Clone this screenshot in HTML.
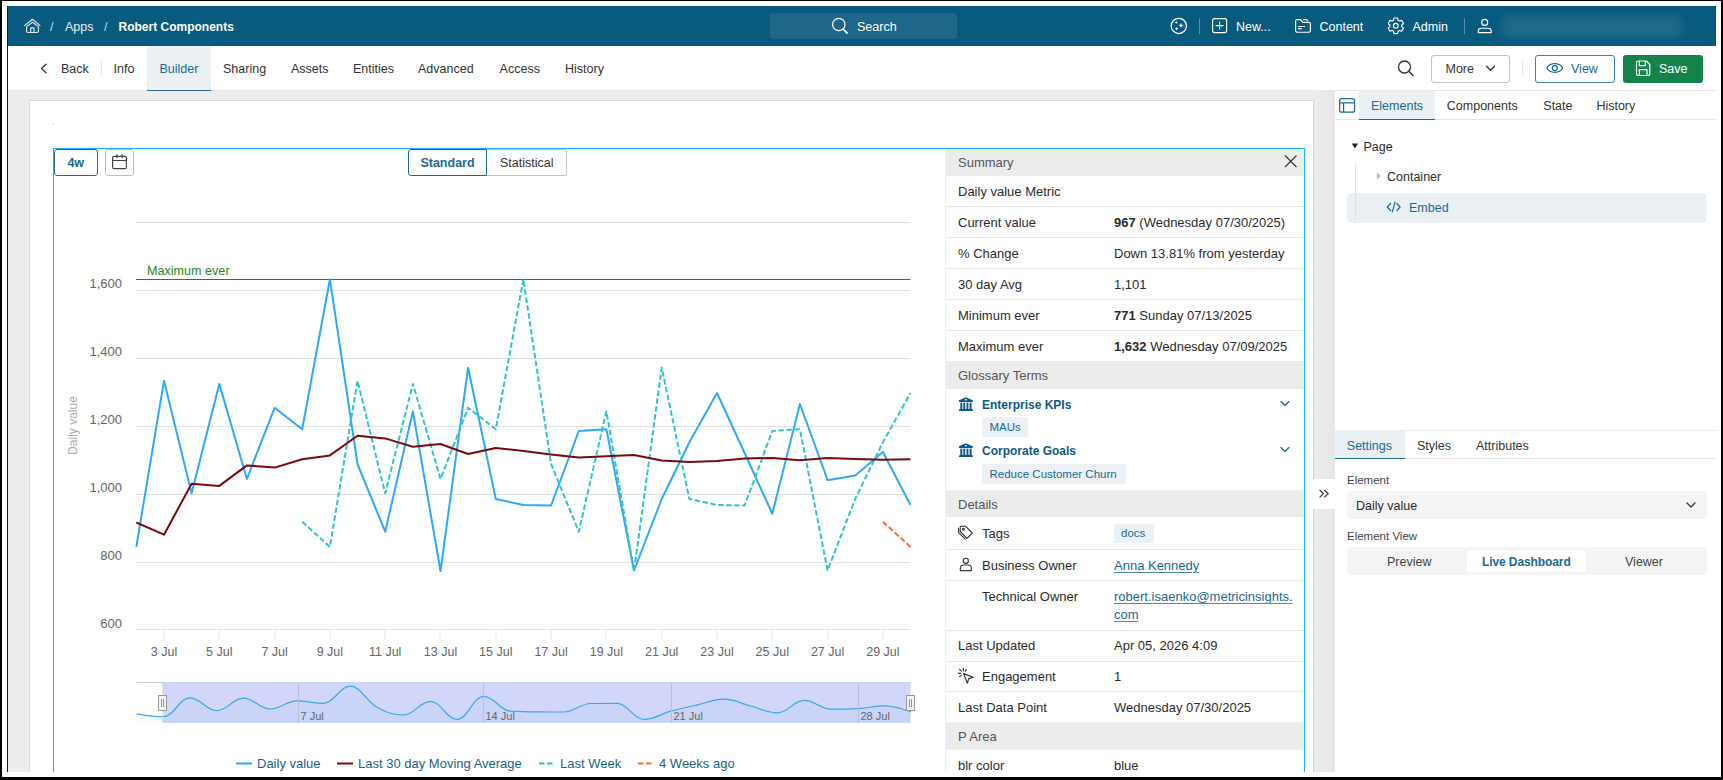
<!DOCTYPE html>
<html><head><meta charset="utf-8">
<style>
*{box-sizing:border-box;margin:0;padding:0}
html,body{width:1723px;height:780px;overflow:hidden;background:#fff;font-family:"Liberation Sans",sans-serif;font-size:13px;color:#2b2b2b}
.a{position:absolute}
.t{position:absolute;white-space:nowrap;line-height:16px}
svg{position:absolute;overflow:visible}
</style></head><body>
<!-- frame -->
<div class="a" style="left:0;top:0;width:1723px;height:1px;background:#000"></div>
<div class="a" style="left:0;top:0;width:2px;height:780px;background:#000"></div>
<div class="a" style="left:1721px;top:0;width:2px;height:780px;background:#000"></div>
<div class="a" style="left:0;top:777px;width:1723px;height:3px;background:#000"></div>
<div class="a" style="left:7px;top:6px;width:1px;height:766px;background:#1a1a1a"></div>

<!-- gray background -->
<div class="a" style="left:8px;top:91px;width:1708px;height:681px;background:#ededed"></div>

<!-- header -->
<div class="a" style="left:8px;top:6px;width:1708px;height:40px;background:#085a7e"></div>

<svg style="left:0;top:0" width="1723" height="50" viewBox="0 0 1723 50" fill="none" stroke="#e3ecf1" stroke-width="1.15" stroke-linecap="round" stroke-linejoin="round">
 <path d="M24.5 25.6 L32.5 19.3 L40 25.6"/>
 <path d="M26.6 26.6 L32.5 22.2 L38.4 26.6 V31 Q38.4 32.5 36.9 32.5 H28.1 Q26.6 32.5 26.6 31 Z"/>
 <path d="M30.7 32.5 V27.8 H34 V32.5"/>
 <circle cx="1178.8" cy="25.9" r="7.6" stroke="#fff" stroke-width="1.25"/>
 <path d="M1181 22.9 Q1181.4 25.1 1183.6 25.5 Q1181.4 25.9 1181 28.1 Q1180.6 25.9 1178.4 25.5 Q1180.6 25.1 1181 22.9Z" fill="#fff" stroke="none"/>
 <path d="M1176.3 21 Q1176.5 22.3 1177.8 22.5 Q1176.5 22.7 1176.3 24 Q1176.1 22.7 1174.8 22.5 Q1176.1 22.3 1176.3 21Z" fill="#fff" stroke="none"/>
 <path d="M1176.6 26.9 Q1176.9 28.4 1178.4 28.7 Q1176.9 29 1176.6 30.5 Q1176.3 29 1174.8 28.7 Q1176.3 28.4 1176.6 26.9Z" fill="#fff" stroke="none"/>
 <path d="M1199.5 18.5 V33.5" stroke="#5e8eaa" stroke-width="1"/>
 <rect x="1212.6" y="18.6" width="14" height="14" rx="2" stroke="#fff" stroke-width="1.2"/>
 <path d="M1219.6 22.1 V29.1 M1216.1 25.6 H1223.1" stroke="#fff" stroke-width="1.2"/>
 <path d="M1303.6 19.6 H1306.7 L1307.7 20.6" stroke="#fff" stroke-width="1.15"/>
 <path d="M1295.6 30.8 V21 Q1295.6 19.6 1297 19.6 H1300.6 L1302.8 22.4 H1309 Q1310.4 22.4 1310.4 23.8 V30.8 Q1310.4 32.2 1309 32.2 H1297 Q1295.6 32.2 1295.6 30.8Z" stroke="#fff" stroke-width="1.15"/>
 <path d="M1298.4 26.5 H1304.6 M1298.4 28.6 H1301.4" stroke="#fff" stroke-width="1.1"/>
 <path d="M1464.5 18.5 V33.5" stroke="#5e8eaa" stroke-width="1"/>
 <circle cx="1484.7" cy="22.4" r="3" stroke="#fff" stroke-width="1.15"/>
 <path d="M1478.3 32.6 V31 Q1478.3 28.2 1481.5 28.2 H1488 Q1491.2 28.2 1491.2 31 V32.6 Z" stroke="#fff" stroke-width="1.15"/>
<path d="M1394.00 18.01 L1397.60 18.01 L1398.05 20.24 L1399.49 21.07 L1401.65 20.34 L1403.45 23.46 L1401.74 24.96 L1401.74 26.64 L1403.45 28.14 L1401.65 31.26 L1399.49 30.53 L1398.05 31.36 L1397.60 33.59 L1394.00 33.59 L1393.55 31.36 L1392.11 30.53 L1389.95 31.26 L1388.15 28.14 L1389.86 26.64 L1389.86 24.96 L1388.15 23.46 L1389.95 20.34 L1392.11 21.07 L1393.55 20.24Z" stroke="#fff" stroke-width="1.15"/><circle cx="1395.8" cy="25.8" r="2.4" stroke="#fff" stroke-width="1.15"/>
</svg>

<div class="t" style="left:50px;top:18.5px;color:#c9d9e3;font-size:12.5px">/</div>
<div class="t" style="left:65px;top:18.5px;color:#e8eff3;font-size:12.5px">Apps</div>
<div class="t" style="left:104px;top:18.5px;color:#c9d9e3;font-size:12.5px">/</div>
<div class="t" style="left:118.5px;top:18.5px;color:#fff;font-size:12px;font-weight:bold">Robert Components</div>
<div class="a" style="left:770px;top:13px;width:187px;height:26px;border-radius:3px;background:#1f678a"></div>
<svg style="left:0;top:0" width="1000" height="50" fill="none" stroke="#fff" stroke-width="1.2">
 <circle cx="838.8" cy="24.5" r="6.2"/>
 <path d="M843.2 29.2 L847 33" stroke-width="1.8" stroke-linecap="round"/>
</svg>
<div class="t" style="left:857px;top:18.5px;color:#fff;font-size:12.5px">Search</div>
<div class="t" style="left:1236px;top:18.5px;color:#fff;font-size:12.5px">New...</div>
<div class="t" style="left:1319.5px;top:18.5px;color:#fff;font-size:12.5px">Content</div>
<div class="t" style="left:1412.5px;top:18.5px;color:#fff;font-size:12.5px">Admin</div>
<div class="a" style="left:1498px;top:12px;width:188px;height:29px;overflow:hidden"><div style="position:absolute;left:4px;top:3px;width:180px;height:23px;border-radius:6px;background:#1f6a8a;filter:blur(5px)"></div></div>


<!-- toolbar -->
<div class="a" style="left:8px;top:46px;width:1708px;height:45px;background:#fff"></div>

<div class="a" style="left:8px;top:90px;width:1708px;height:1px;background:#e6e6e6"></div>
<div class="a" style="left:147px;top:46px;width:63.6px;height:45px;background:#ebf0f4"></div>
<div class="a" style="left:147px;top:89.5px;width:63.6px;height:1.5px;background:#1f6c96"></div>
<svg style="left:0;top:46px" width="120" height="45" fill="none" stroke="#333" stroke-width="1.3" stroke-linecap="round" stroke-linejoin="round">
 <path d="M46 18.2 L41.5 22.5 L46 26.8"/>
</svg>
<div class="a" style="left:100.5px;top:60px;width:1px;height:16px;background:#e8e8e8"></div>
<div class="t" style="left:61.0px;top:60.5px;color:#333;font-size:12.5px">Back</div>
<div class="t" style="left:113.6px;top:60.5px;color:#333;font-size:12.5px">Info</div>
<div class="t" style="left:159.4px;top:60.5px;color:#1a6a94;font-size:12.5px">Builder</div>
<div class="t" style="left:223.0px;top:60.5px;color:#333;font-size:12.5px">Sharing</div>
<div class="t" style="left:290.9px;top:60.5px;color:#333;font-size:12.5px">Assets</div>
<div class="t" style="left:353.0px;top:60.5px;color:#333;font-size:12.5px">Entities</div>
<div class="t" style="left:418.0px;top:60.5px;color:#333;font-size:12.5px">Advanced</div>
<div class="t" style="left:499.6px;top:60.5px;color:#333;font-size:12.5px">Access</div>
<div class="t" style="left:565.0px;top:60.5px;color:#333;font-size:12.5px">History</div>


<div class="a" style="left:1430.5px;top:54.5px;width:79px;height:28px;border:1px solid #c4c4c4;border-radius:3px"></div>
<div class="t" style="left:1445.5px;top:60.5px;color:#333;font-size:12.5px">More</div>
<div class="a" style="left:1522px;top:61px;width:1px;height:15px;background:#e8e8e8"></div>
<div class="a" style="left:1535px;top:54.5px;width:80px;height:28px;border:1px solid #3f80a6;border-radius:3px"></div>
<div class="t" style="left:1571px;top:60.5px;color:#1a6a94;font-size:12.5px">View</div>
<div class="a" style="left:1623px;top:54.5px;width:80px;height:28px;background:#15824a;border-radius:3px"></div>
<div class="t" style="left:1659px;top:60.5px;color:#fff;font-size:12.5px">Save</div>
<svg style="left:0;top:46px" width="1723" height="45" fill="none" stroke="#333" stroke-width="1.3" stroke-linecap="round" stroke-linejoin="round">
 <circle cx="1404.5" cy="21" r="6"/>
 <path d="M1408.8 25.3 L1413 29.5"/>
 <path d="M1486.5 20.3 L1490.5 24.3 L1494.5 20.3"/>
 <path d="M1546.8 22 C1550 16.3 1559.6 16.3 1562.8 22 C1559.6 27.7 1550 27.7 1546.8 22Z" stroke="#1a6a94" stroke-width="1.25"/>
 <circle cx="1554.8" cy="22" r="2.5" stroke="#1a6a94" stroke-width="1.25"/>
 <path d="M1636.5 16.5 Q1636.5 15 1638 15 H1646.3 L1649.8 18.5 V28 Q1649.8 29.5 1648.3 29.5 H1638 Q1636.5 29.5 1636.5 28Z" stroke="#fff" stroke-width="1.2"/>
 <path d="M1639.3 15.2 V19.6 H1645.3 V15.2 M1639.3 29.3 V23.6 H1647 V29.3" stroke="#fff" stroke-width="1.2"/>
</svg>


<!-- page canvas -->
<div class="a" style="left:29px;top:100px;width:1285px;height:672px;background:#fff;border:1px solid #d9d9d9;border-bottom:none"></div>

<div class="a" style="left:52.5px;top:122.5px;width:1.5px;height:1.5px;background:#c4c4c4"></div>
<div class="a" style="left:53px;top:148px;width:1252px;height:624px;border:1px solid #1cb4fa;border-bottom:none"></div>

<div class="a" style="left:54px;top:148.5px;width:43.5px;height:27.5px;border:1px solid #1a6a94;border-radius:3px;background:#fff"></div>
<div class="t" style="left:54px;width:43.5px;text-align:center;top:155px;color:#1a6a94;font-size:12.5px;font-weight:bold">4w</div>
<div class="a" style="left:105px;top:148.5px;width:28.5px;height:27px;border:1px solid #bdbdbd;border-radius:3px;background:#fff"></div>
<svg style="left:0;top:0" width="200" height="200" fill="none" stroke="#444" stroke-width="1.2">
 <rect x="112.6" y="156.3" width="13.8" height="12.4" rx="1.8"/>
 <path d="M112.6 160.5 H126.4 M116.9 154.2 V158.2 M122.1 154.2 V158.2"/>
</svg>
<div class="a" style="left:487px;top:149px;width:79.5px;height:27px;border:1px solid #c4c4c4;border-left:none;border-radius:0 3px 3px 0;background:#fff"></div>
<div class="a" style="left:408px;top:149px;width:79px;height:27px;border:1px solid #1a6a94;border-radius:3px 0 0 3px;background:#fff"></div>
<div class="t" style="left:408px;width:79px;text-align:center;top:155px;color:#1a6a94;font-size:12.5px;font-weight:bold">Standard</div>
<div class="t" style="left:487px;width:79.5px;text-align:center;top:155px;color:#333;font-size:12.5px">Statistical</div>
<svg style="left:0;top:0" width="1723" height="780" font-family="Liberation Sans, sans-serif">
<path d="M136 222.5 H910.5" stroke="#e0e0e0" stroke-width="1"/>
<path d="M136 290.5 H910.5" stroke="#e0e0e0" stroke-width="1"/>
<path d="M136 358.5 H910.5" stroke="#e0e0e0" stroke-width="1"/>
<path d="M136 426.5 H910.5" stroke="#e0e0e0" stroke-width="1"/>
<path d="M136 494.5 H910.5" stroke="#e0e0e0" stroke-width="1"/>
<path d="M136 562.5 H910.5" stroke="#e0e0e0" stroke-width="1"/>
<path d="M136 629.5 H910.5" stroke="#e3e3e3" stroke-width="1"/>
<path d="M164.0 629.5 V639" stroke="#e3e3e3" stroke-width="1"/>
<path d="M219.0 629.5 V639" stroke="#e3e3e3" stroke-width="1"/>
<path d="M275.0 629.5 V639" stroke="#e3e3e3" stroke-width="1"/>
<path d="M330.0 629.5 V639" stroke="#e3e3e3" stroke-width="1"/>
<path d="M385.0 629.5 V639" stroke="#e3e3e3" stroke-width="1"/>
<path d="M440.0 629.5 V639" stroke="#e3e3e3" stroke-width="1"/>
<path d="M496.0 629.5 V639" stroke="#e3e3e3" stroke-width="1"/>
<path d="M551.0 629.5 V639" stroke="#e3e3e3" stroke-width="1"/>
<path d="M606.0 629.5 V639" stroke="#e3e3e3" stroke-width="1"/>
<path d="M662.0 629.5 V639" stroke="#e3e3e3" stroke-width="1"/>
<path d="M717.0 629.5 V639" stroke="#e3e3e3" stroke-width="1"/>
<path d="M772.0 629.5 V639" stroke="#e3e3e3" stroke-width="1"/>
<path d="M828.0 629.5 V639" stroke="#e3e3e3" stroke-width="1"/>
<path d="M883.0 629.5 V639" stroke="#e3e3e3" stroke-width="1"/>
<text x="122" y="287.5" text-anchor="end" font-size="13" fill="#666">1,600</text>
<text x="122" y="355.5" text-anchor="end" font-size="13" fill="#666">1,400</text>
<text x="122" y="423.5" text-anchor="end" font-size="13" fill="#666">1,200</text>
<text x="122" y="491.5" text-anchor="end" font-size="13" fill="#666">1,000</text>
<text x="122" y="559.5" text-anchor="end" font-size="13" fill="#666">800</text>
<text x="122" y="627.5" text-anchor="end" font-size="13" fill="#666">600</text>
<text x="164.0" y="656" text-anchor="middle" font-size="12.5" fill="#666">3 Jul</text>
<text x="219.3" y="656" text-anchor="middle" font-size="12.5" fill="#666">5 Jul</text>
<text x="274.6" y="656" text-anchor="middle" font-size="12.5" fill="#666">7 Jul</text>
<text x="329.9" y="656" text-anchor="middle" font-size="12.5" fill="#666">9 Jul</text>
<text x="385.2" y="656" text-anchor="middle" font-size="12.5" fill="#666">11 Jul</text>
<text x="440.5" y="656" text-anchor="middle" font-size="12.5" fill="#666">13 Jul</text>
<text x="495.8" y="656" text-anchor="middle" font-size="12.5" fill="#666">15 Jul</text>
<text x="551.1" y="656" text-anchor="middle" font-size="12.5" fill="#666">17 Jul</text>
<text x="606.4" y="656" text-anchor="middle" font-size="12.5" fill="#666">19 Jul</text>
<text x="661.7" y="656" text-anchor="middle" font-size="12.5" fill="#666">21 Jul</text>
<text x="717.0" y="656" text-anchor="middle" font-size="12.5" fill="#666">23 Jul</text>
<text x="772.3" y="656" text-anchor="middle" font-size="12.5" fill="#666">25 Jul</text>
<text x="827.6" y="656" text-anchor="middle" font-size="12.5" fill="#666">27 Jul</text>
<text x="882.9" y="656" text-anchor="middle" font-size="12.5" fill="#666">29 Jul</text>
<text transform="translate(76.5 425.5) rotate(-90)" text-anchor="middle" font-size="12" fill="#aaa">Daily value</text>
<path d="M136 279.5 H910.5" stroke="#138a13" stroke-width="1.2"/>
<text x="147" y="275" font-size="12.6" fill="#1d8c1d">Maximum ever</text>
<path d="M136.3 547.0 L164.0 380.8 L191.6 493.3 L219.3 383.9 L246.9 479.0 L274.6 407.8 L302.2 429.2 L329.9 279.2 L357.5 464.0 L385.2 531.7 L412.9 411.3 L440.5 571.0 L468.1 367.7 L495.8 499.0 L523.4 505.0 L551.1 505.5 L578.8 431.0 L606.4 429.2 L634.0 570.5 L661.7 499.0 L689.4 442.3 L717.0 393.0 L744.6 453.0 L772.3 513.8 L799.9 404.0 L827.6 480.2 L855.2 475.4 L882.9 452.0 L910.5 505.0" fill="none" stroke="#2ea8fb" stroke-width="2" stroke-linejoin="round"/>
<path d="M302.2 521.7 L329.9 547.0 L357.5 380.8 L385.2 493.3 L412.9 383.9 L440.5 479.0 L468.1 407.8 L495.8 429.2 L523.4 279.2 L551.1 464.0 L578.8 531.7 L606.4 411.3 L634.0 571.0 L661.7 367.7 L689.4 499.0 L717.0 505.0 L744.6 505.5 L772.3 431.0 L799.9 429.2 L827.6 570.5 L855.2 499.0 L882.9 442.3 L910.5 393.0" fill="none" stroke="#2ec6c8" stroke-width="2" stroke-dasharray="5.5 2.5" stroke-linejoin="round"/>
<path d="M882.9 521.7 L910.5 547.0" fill="none" stroke="#f76d2d" stroke-width="2" stroke-dasharray="5.5 2.5"/>
<path d="M136.3 522.5 L164.0 534.7 L191.6 483.7 L219.3 485.9 L246.9 465.4 L274.6 467.6 L302.2 459.3 L329.9 455.4 L357.5 435.8 L385.2 438.4 L412.9 446.7 L440.5 444.0 L468.1 454.0 L495.8 448.0 L523.4 451.0 L551.1 454.5 L578.8 457.6 L606.4 456.2 L634.0 455.0 L661.7 460.6 L689.4 462.0 L717.0 461.0 L744.6 458.4 L772.3 458.0 L799.9 460.2 L827.6 458.0 L855.2 458.9 L882.9 459.7 L910.5 459.3" fill="none" stroke="#7a0a0a" stroke-width="2" stroke-linejoin="round"/>
<rect x="163" y="682.5" width="747.5" height="40.5" fill="#d2d6fa"/>
<path d="M136.6 713.8 C136.6 713.8 152.6 716.7 163.3 716.7 C174.0 716.7 179.3 697.8 190.0 697.8 C200.7 697.8 206.0 710.6 216.7 710.6 C227.4 710.6 232.7 698.1 243.4 698.1 C254.1 698.1 259.4 709.0 270.1 709.0 C280.8 709.0 286.1 700.9 296.8 700.9 C307.5 700.9 312.8 703.3 323.5 703.3 C334.2 703.3 339.5 686.2 350.2 686.2 C360.9 686.2 366.2 701.5 376.9 707.3 C387.6 713.0 393.0 715.0 403.6 715.0 C414.3 715.0 419.7 701.3 430.3 701.3 C441.0 701.3 446.4 719.4 457.0 719.4 C467.7 719.4 473.1 696.3 483.7 696.3 C494.4 696.3 499.8 710.6 510.4 711.2 C521.1 711.9 526.5 711.9 537.2 711.9 C547.8 712.0 553.2 712.0 563.9 712.0 C574.5 712.0 579.9 703.7 590.6 703.5 C601.2 703.3 606.6 703.3 617.3 703.3 C627.9 703.3 633.3 719.4 644.0 719.4 C654.6 719.4 660.0 714.2 670.7 711.2 C681.4 708.3 686.7 707.2 697.4 704.8 C708.1 702.4 713.4 699.2 724.1 699.2 C734.8 699.2 740.1 703.3 750.8 706.0 C761.5 708.8 766.8 712.9 777.5 712.9 C788.2 712.9 793.5 700.4 804.2 700.4 C814.9 700.4 820.2 709.1 830.9 709.1 C841.6 709.1 846.9 709.1 857.6 708.6 C868.3 708.0 873.6 705.9 884.3 705.9 C895.0 705.9 911.0 711.9 911.0 711.9 L911 723 L136.6 723Z" fill="#36a9f2" fill-opacity="0.05"/>
<path d="M136.6 713.8 C136.6 713.8 152.6 716.7 163.3 716.7 C174.0 716.7 179.3 697.8 190.0 697.8 C200.7 697.8 206.0 710.6 216.7 710.6 C227.4 710.6 232.7 698.1 243.4 698.1 C254.1 698.1 259.4 709.0 270.1 709.0 C280.8 709.0 286.1 700.9 296.8 700.9 C307.5 700.9 312.8 703.3 323.5 703.3 C334.2 703.3 339.5 686.2 350.2 686.2 C360.9 686.2 366.2 701.5 376.9 707.3 C387.6 713.0 393.0 715.0 403.6 715.0 C414.3 715.0 419.7 701.3 430.3 701.3 C441.0 701.3 446.4 719.4 457.0 719.4 C467.7 719.4 473.1 696.3 483.7 696.3 C494.4 696.3 499.8 710.6 510.4 711.2 C521.1 711.9 526.5 711.9 537.2 711.9 C547.8 712.0 553.2 712.0 563.9 712.0 C574.5 712.0 579.9 703.7 590.6 703.5 C601.2 703.3 606.6 703.3 617.3 703.3 C627.9 703.3 633.3 719.4 644.0 719.4 C654.6 719.4 660.0 714.2 670.7 711.2 C681.4 708.3 686.7 707.2 697.4 704.8 C708.1 702.4 713.4 699.2 724.1 699.2 C734.8 699.2 740.1 703.3 750.8 706.0 C761.5 708.8 766.8 712.9 777.5 712.9 C788.2 712.9 793.5 700.4 804.2 700.4 C814.9 700.4 820.2 709.1 830.9 709.1 C841.6 709.1 846.9 709.1 857.6 708.6 C868.3 708.0 873.6 705.9 884.3 705.9 C895.0 705.9 911.0 711.9 911.0 711.9" fill="none" stroke="#36a9f2" stroke-width="1.2"/>
<path d="M298.5 682.5 V723" stroke="#b9bde0" stroke-width="1"/>
<text x="300.5" y="720" font-size="11" fill="#666">7 Jul</text>
<path d="M483.5 682.5 V723" stroke="#b9bde0" stroke-width="1"/>
<text x="485.5" y="720" font-size="11" fill="#666">14 Jul</text>
<path d="M671.5 682.5 V723" stroke="#b9bde0" stroke-width="1"/>
<text x="673.5" y="720" font-size="11" fill="#666">21 Jul</text>
<path d="M858.5 682.5 V723" stroke="#b9bde0" stroke-width="1"/>
<text x="860.5" y="720" font-size="11" fill="#666">28 Jul</text>
<path d="M136.5 682.5 H163 V723" stroke="#cfcfcf" stroke-width="1" fill="none"/>
<path d="M163 682.5 H911" stroke="#cfd2f2" stroke-width="1" fill="none"/>
<rect x="158.5" y="695.5" width="8" height="15" fill="#f2f2f2" stroke="#999" stroke-width="1"/>
<path d="M161.5 699 V707 M163.5 699 V707" stroke="#999" stroke-width="1"/>
<rect x="906.5" y="695.5" width="8" height="15" fill="#f2f2f2" stroke="#999" stroke-width="1"/>
<path d="M909.5 699 V707 M911.5 699 V707" stroke="#999" stroke-width="1"/>
<path d="M236.0 763.5 H252.0" stroke="#2ea8fb" stroke-width="2" />
<text x="257.0" y="767.5" font-size="13" fill="#1b5f87">Daily value</text>
<path d="M337.0 763.5 H353.0" stroke="#7a0a0a" stroke-width="2" />
<text x="358.0" y="767.5" font-size="13" fill="#1b5f87">Last 30 day Moving Average</text>
<path d="M539.0 763.5 H555.0" stroke="#2ec6c8" stroke-width="2" stroke-dasharray="5.5 2.5"/>
<text x="560.0" y="767.5" font-size="13" fill="#1b5f87">Last Week</text>
<path d="M638.0 763.5 H654.0" stroke="#f76d2d" stroke-width="2" stroke-dasharray="5.5 2.5"/>
<text x="659.0" y="767.5" font-size="13" fill="#1b5f87">4 Weeks ago</text>
</svg>


<!-- right panel -->
<div class="a" style="left:1335px;top:91px;width:381px;height:681px;background:#fff"></div>
<div class="a" style="left:1313px;top:100px;width:1px;height:672px;background:#d4d4d4;"></div>
<div class="a" style="left:1314px;top:91px;width:21px;height:681px;background:linear-gradient(90deg,#ececec,#e6e6e6);"></div>
<div class="a" style="left:1335px;top:119px;width:381px;height:1px;background:#e6e6e6;"></div>
<div class="a" style="left:1359px;top:91px;width:76px;height:29px;background:#ebf0f4;"></div>
<div class="a" style="left:1359px;top:118.5px;width:76px;height:1.5px;background:#1f6c96;"></div>
<div class="t" style="left:1371px;top:98px;color:#1a6a94;font-size:12.5px;font-weight:normal;">Elements</div>
<div class="t" style="left:1446.8px;top:98px;color:#333;font-size:12.5px;font-weight:normal;">Components</div>
<div class="t" style="left:1543.3px;top:98px;color:#333;font-size:12.5px;font-weight:normal;">State</div>
<div class="t" style="left:1596.4px;top:98px;color:#333;font-size:12.5px;font-weight:normal;">History</div>
<div class="t" style="left:1363.5px;top:138.5px;color:#2b2b2b;font-size:12.5px;font-weight:normal;">Page</div>
<div class="t" style="left:1387px;top:168.5px;color:#2b2b2b;font-size:12.5px;font-weight:normal;">Container</div>
<div class="a" style="left:1347px;top:193px;width:360px;height:30px;background:#ebf0f4;border-radius:4px"></div>
<div class="a" style="left:1355px;top:163px;width:1px;height:60px;background:#e2e2e2;"></div>
<div class="t" style="left:1409px;top:199.5px;color:#1a6a94;font-size:12.5px;font-weight:normal;">Embed</div>
<div class="a" style="left:1335px;top:430px;width:381px;height:1px;background:#ebebeb;"></div>
<div class="a" style="left:1335px;top:458px;width:381px;height:1px;background:#e6e6e6;"></div>
<div class="a" style="left:1335px;top:430px;width:70px;height:29px;background:#ebf0f4;"></div>
<div class="a" style="left:1335px;top:457.5px;width:70px;height:1.5px;background:#1f6c96;"></div>
<div class="t" style="left:1346.8px;top:438px;color:#1a6a94;font-size:12.5px;font-weight:normal;">Settings</div>
<div class="t" style="left:1417px;top:438px;color:#333;font-size:12.5px;font-weight:normal;">Styles</div>
<div class="t" style="left:1476px;top:438px;color:#333;font-size:12.5px;font-weight:normal;">Attributes</div>
<div class="t" style="left:1347px;top:472px;color:#444;font-size:11.5px;font-weight:normal;">Element</div>
<div class="a" style="left:1347px;top:491px;width:360px;height:28px;background:#f4f4f4;border-radius:4px"></div>
<div class="t" style="left:1356px;top:498px;color:#2b2b2b;font-size:12.5px;font-weight:normal;">Daily value</div>
<div class="t" style="left:1347px;top:528px;color:#444;font-size:11.5px;font-weight:normal;">Element View</div>
<div class="a" style="left:1347px;top:547px;width:360px;height:28px;background:#f4f4f4;border-radius:4px"></div>
<div class="a" style="left:1467px;top:550px;width:119px;height:22px;background:#fff;border-radius:3px;box-shadow:0 0 1px rgba(0,0,0,0.08)"></div>
<div class="t" style="left:1387px;top:554px;color:#444;font-size:12.5px;font-weight:normal;">Preview</div>
<div class="t" style="left:1482px;top:554px;color:#1a6a94;font-size:12px;font-weight:bold;letter-spacing:-0.1px">Live Dashboard</div>
<div class="t" style="left:1625px;top:554px;color:#444;font-size:12.5px;font-weight:normal;">Viewer</div>
<div class="a" style="left:1313px;top:479px;width:22px;height:30px;background:#fff;border-radius:1px 0 0 1px"></div>
<svg style="left:0;top:0" width="1723" height="780" fill="none">
 <g stroke="#1a6a94" stroke-width="1.2" stroke-linejoin="round">
  <rect x="1339.6" y="98.6" width="15" height="13.6" rx="2"/>
  <path d="M1339.6 102.8 H1354.6 M1343.6 102.8 V112.2"/>
 </g>
 <path d="M1351.8 143.4 H1358 L1354.9 148.6Z" fill="#222"/>
 <path d="M1377 172.8 V179.2 L1380.8 176Z" fill="#b5b5b5"/>
 <g stroke="#1a6a94" stroke-width="1.2" stroke-linecap="round" stroke-linejoin="round">
  <path d="M1390.6 203.5 L1387.3 207 L1390.6 210.5 M1396.8 203.5 L1400.1 207 L1396.8 210.5 M1395 202.2 L1392.4 211.8"/>
 </g>
 <path d="M1687 503 L1691 507 L1695 503" stroke="#333" stroke-width="1.3" stroke-linecap="round" stroke-linejoin="round"/>
 <path d="M1319.6 490 L1323.4 493.6 L1319.6 497.4 M1324.3 490 L1328.1 493.6 L1324.3 497.4" stroke="#333" stroke-width="1.2" stroke-linejoin="miter"/>
</svg>
<!-- summary -->
<div class="a" style="left:945px;top:149px;width:1px;height:623px;background:#efefef;"></div>
<div class="a" style="left:946px;top:149px;width:358px;height:27px;background:#ececec;"></div>
<div class="t" style="left:958px;top:154.5px;color:#555;font-size:13px;font-weight:normal;">Summary</div>
<div class="a" style="left:946px;top:361px;width:358px;height:28px;background:#ececec;"></div>
<div class="t" style="left:958px;top:368px;color:#555;font-size:13px;font-weight:normal;">Glossary Terms</div>
<div class="a" style="left:946px;top:490px;width:358px;height:27px;background:#ececec;"></div>
<div class="t" style="left:958px;top:497.0px;color:#555;font-size:13px;font-weight:normal;">Details</div>
<div class="a" style="left:946px;top:722px;width:358px;height:28px;background:#ececec;"></div>
<div class="t" style="left:958px;top:728.5px;color:#555;font-size:13px;font-weight:normal;">P Area</div>
<div class="a" style="left:946px;top:206px;width:358px;height:1px;background:#e8e8e8;"></div>
<div class="a" style="left:946px;top:237px;width:358px;height:1px;background:#e8e8e8;"></div>
<div class="a" style="left:946px;top:268px;width:358px;height:1px;background:#e8e8e8;"></div>
<div class="a" style="left:946px;top:299px;width:358px;height:1px;background:#e8e8e8;"></div>
<div class="a" style="left:946px;top:330px;width:358px;height:1px;background:#e8e8e8;"></div>
<div class="a" style="left:946px;top:549px;width:358px;height:1px;background:#e8e8e8;"></div>
<div class="a" style="left:946px;top:580px;width:358px;height:1px;background:#e8e8e8;"></div>
<div class="a" style="left:946px;top:630px;width:358px;height:1px;background:#e8e8e8;"></div>
<div class="a" style="left:946px;top:661px;width:358px;height:1px;background:#e8e8e8;"></div>
<div class="a" style="left:946px;top:691px;width:358px;height:1px;background:#e8e8e8;"></div>
<div class="t" style="left:958px;top:184.0px;color:#2b2b2b;font-size:13px;font-weight:normal;">Daily value Metric</div>
<div class="t" style="left:958px;top:215.0px;color:#2b2b2b;font-size:13px;font-weight:normal;">Current value</div>
<div class="t" style="left:1114px;top:215.0px;color:#2b2b2b;font-size:13px"><b>967</b> (Wednesday 07/30/2025)</div>
<div class="t" style="left:958px;top:246.0px;color:#2b2b2b;font-size:13px;font-weight:normal;">% Change</div>
<div class="t" style="left:1114px;top:246.0px;color:#2b2b2b;font-size:13px;font-weight:normal;">Down 13.81% from yesterday</div>
<div class="t" style="left:958px;top:277.0px;color:#2b2b2b;font-size:13px;font-weight:normal;">30 day Avg</div>
<div class="t" style="left:1114px;top:277.0px;color:#2b2b2b;font-size:13px;font-weight:normal;">1,101</div>
<div class="t" style="left:958px;top:308.0px;color:#2b2b2b;font-size:13px;font-weight:normal;">Minimum ever</div>
<div class="t" style="left:1114px;top:308.0px;color:#2b2b2b;font-size:13px"><b>771</b> Sunday 07/13/2025</div>
<div class="t" style="left:958px;top:339.0px;color:#2b2b2b;font-size:13px;font-weight:normal;">Maximum ever</div>
<div class="t" style="left:1114px;top:339.0px;color:#2b2b2b;font-size:13px"><b>1,632</b> Wednesday 07/09/2025</div>
<div class="t" style="left:982px;top:396.5px;color:#0d5a80;font-size:12px;font-weight:bold;">Enterprise KPIs</div>
<div class="a" style="left:982px;top:417px;width:46px;height:20px;background:#ebf1f5;"></div>
<div class="t" style="left:989.5px;top:419px;color:#1a6a94;font-size:11.5px;font-weight:normal;">MAUs</div>
<div class="t" style="left:982px;top:442.5px;color:#0d5a80;font-size:12px;font-weight:bold;">Corporate Goals</div>
<div class="a" style="left:982px;top:464px;width:144px;height:20px;background:#ebf1f5;"></div>
<div class="t" style="left:989.5px;top:466px;color:#1a6a94;font-size:11.5px;font-weight:normal;">Reduce Customer Churn</div>
<div class="t" style="left:982px;top:526.0px;color:#2b2b2b;font-size:13px;font-weight:normal;">Tags</div>
<div class="a" style="left:1114px;top:524px;width:39.5px;height:19px;background:#ebf1f5;"></div>
<div class="t" style="left:1121px;top:524.5px;color:#1a6a94;font-size:11.5px;font-weight:normal;">docs</div>
<div class="t" style="left:982px;top:558.0px;color:#2b2b2b;font-size:13px;font-weight:normal;">Business Owner</div>
<div class="t" style="left:1114px;top:558.0px;color:#1a6a94;font-size:13px;font-weight:normal;text-decoration:underline;text-decoration-thickness:1px;text-underline-offset:1.5px;text-decoration-color:#4f8db0">Anna Kennedy</div>
<div class="t" style="left:982px;top:589.0px;color:#2b2b2b;font-size:13px;font-weight:normal;">Technical Owner</div>
<div class="t" style="left:1114px;top:589.0px;color:#1a6a94;font-size:13px;font-weight:normal;text-decoration:underline;text-decoration-thickness:1px;text-underline-offset:1.5px;text-decoration-color:#4f8db0">robert.isaenko@metricinsights.</div>
<div class="t" style="left:1114px;top:607.0px;color:#1a6a94;font-size:13px;font-weight:normal;text-decoration:underline;text-decoration-thickness:1px;text-underline-offset:1.5px;text-decoration-color:#4f8db0">com</div>
<div class="t" style="left:958px;top:638.0px;color:#2b2b2b;font-size:13px;font-weight:normal;">Last Updated</div>
<div class="t" style="left:1114px;top:638.0px;color:#2b2b2b;font-size:13px;font-weight:normal;">Apr 05, 2026 4:09</div>
<div class="t" style="left:982px;top:669.0px;color:#2b2b2b;font-size:13px;font-weight:normal;">Engagement</div>
<div class="t" style="left:1114px;top:669.0px;color:#2b2b2b;font-size:13px;font-weight:normal;">1</div>
<div class="t" style="left:958px;top:700.0px;color:#2b2b2b;font-size:13px;font-weight:normal;">Last Data Point</div>
<div class="t" style="left:1114px;top:700.0px;color:#2b2b2b;font-size:13px;font-weight:normal;">Wednesday 07/30/2025</div>
<div class="t" style="left:958px;top:758.0px;color:#2b2b2b;font-size:13px;font-weight:normal;">blr color</div>
<div class="t" style="left:1114px;top:758.0px;color:#2b2b2b;font-size:13px;font-weight:normal;">blue</div>
<svg style="left:0;top:0" width="1723" height="780" fill="none">
 <path d="M1285 155.5 L1296.5 167 M1296.5 155.5 L1285 167" stroke="#333" stroke-width="1.1"/>
 <path d="M1281 401.5 L1285 405.5 L1289 401.5 M1281 447.5 L1285 451.5 L1289 447.5" stroke="#1a6a94" stroke-width="1.3" stroke-linecap="round" stroke-linejoin="round"/>
 <g fill="#0d5a80">
  <path d="M965.9 397.2 L973.2 400.5 L972.6 402.1 H959.2 L958.6 400.5Z"/>
  <rect x="960.3" y="402.6" width="2" height="6.4"/><rect x="963.3" y="402.6" width="1.9" height="6.4"/><rect x="966.5" y="402.6" width="1.9" height="6.4"/><rect x="969.6" y="402.6" width="2" height="6.4"/>
  <path d="M959.6 408.9 H972.2 L973.2 411 H958.6Z"/>
 </g>
 <circle cx="965.9" cy="399.7" r="0.9" fill="#fff"/>
 <g fill="#0d5a80" transform="translate(0 46)">
  <path d="M965.9 397.2 L973.2 400.5 L972.6 402.1 H959.2 L958.6 400.5Z"/>
  <rect x="960.3" y="402.6" width="2" height="6.4"/><rect x="963.3" y="402.6" width="1.9" height="6.4"/><rect x="966.5" y="402.6" width="1.9" height="6.4"/><rect x="969.6" y="402.6" width="2" height="6.4"/>
  <path d="M959.6 408.9 H972.2 L973.2 411 H958.6Z"/>
 </g>
 <circle cx="965.9" cy="445.7" r="0.9" fill="#fff"/>
 <g stroke="#333" stroke-width="1.1" stroke-linejoin="round" stroke-linecap="round">
  <path d="M961 526.2 H965.5 L972.3 533 L967 538.3 L960.2 531.5 V527 Q960.2 526.2 961 526.2Z"/>
  <path d="M958.6 528.2 V532.6 L965.2 539.2"/>
  <circle cx="963.4" cy="529.3" r="0.9"/>
  <circle cx="965.8" cy="560.8" r="2.6"/>
  <path d="M960.3 570.6 V568.4 Q960.3 565 963.7 565 H968 Q971.4 565 971.4 568.4 V570.6Z"/>
  <path d="M963.6 673.6 L973.2 677.3 L968.7 678.6 L967.4 683.2Z" stroke-width="1.15"/>
  <path d="M963.4 668.3 V670.8 M958.3 673.3 H960.7 M959.5 669.4 L961.4 671.2 M966.3 669.6 L965.2 671.3 M959.6 676.6 L961.4 675.3" stroke-width="1.15"/>
 </g>
</svg>

</body></html>
